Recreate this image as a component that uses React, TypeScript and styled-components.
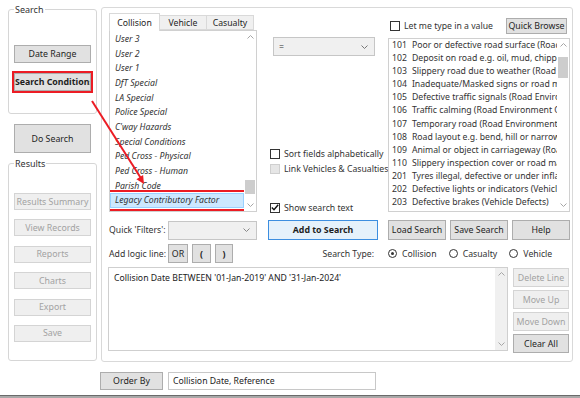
import styled, { createGlobalStyle } from "styled-components";

const GlobalStyle = createGlobalStyle`
  html, body { margin: 0; padding: 0; background: #fff; }
  body {
    font-family: "Noto Sans", "Open Sans", sans-serif;
    font-size: 8.7px;
    color: #1e1e1e;
  }
  * { box-sizing: border-box; }
`;

const Window = styled.div`
  position: relative;
  width: 580px;
  height: 398px;
  overflow: hidden;
  display: flex;
  flex-direction: column;
`;

const Body = styled.div`
  display: flex;
  gap: 4px;
  padding: 3px 0 0 8px;
`;

const LeftCol = styled.div`
  width: 89px;
  display: flex;
  flex-direction: column;
`;

const Group = styled.fieldset<{ $height: number }>`
  margin: 0;
  padding: 0 5px;
  min-width: 0;
  height: ${({ $height }) => $height}px;
  border: 1px solid #d6d6d6;
  border-radius: 3px;
`;

const Legend = styled.legend`
  padding: 0 1px;
  margin-left: 0;
  line-height: 13px;
  font-size: 9px;
  color: #333;
`;

const GroupBody = styled.div<{ $top: number; $gap: number }>`
  display: flex;
  flex-direction: column;
  gap: ${({ $gap }) => $gap}px;
  padding-top: ${({ $top }) => $top}px;
`;

const Btn = styled.button<{ $w?: number; $h?: number; $bold?: boolean; $flagged?: boolean; $primary?: boolean }>`
  width: ${({ $w }) => ($w ? `${$w}px` : "100%")};
  height: ${({ $h }) => $h ?? 19}px;
  flex: none;
  padding: 0;
  margin: 0;
  font-family: inherit;
  font-size: 8.8px;
  font-weight: ${({ $bold }) => ($bold ? 700 : 400)};
  color: #1e1e1e;
  white-space: nowrap;
  overflow: hidden;
  background: ${({ $primary }) => ($primary ? "#e5f1fb" : "#e1e1e1")};
  border: 1px solid ${({ $primary }) => ($primary ? "#3d8ee0" : "#adadad")};
  outline: ${({ $flagged }) => ($flagged ? "2px solid #ec1c24" : "none")};

  &:disabled {
    background: #efefef;
    border-color: #d4d4d4;
    color: #a2a2a2;
  }
`;

const MainPanel = styled.div`
  margin-top: 4px;
  width: 472px;
  height: 355px;
  border: 1px solid #d9d9d9;
  border-radius: 3px;
  padding: 5px 0 0 7px;
`;

const TopGrid = styled.div`
  display: grid;
  grid-template-columns: 148px 111px 182px;
  grid-template-rows: 203px 20px 19px;
  column-gap: 10px;
  row-gap: 4px;
`;

const Cell = styled.div`
  display: flex;
  flex-direction: column;
  min-width: 0;
`;

const InlineCell = styled.div<{ $end?: boolean }>`
  display: flex;
  align-items: center;
  gap: 4px;
  justify-content: ${({ $end }) => ($end ? "flex-end" : "flex-start")};
  padding-right: ${({ $end }) => ($end ? 4 : 0)}px;
  min-width: 0;
`;

const TabStrip = styled.div`
  display: flex;
  align-items: flex-end;
  height: 17px;
  padding-left: 1px;
  position: relative;
  z-index: 1;
`;

const Tab = styled.div<{ $w: number; $active?: boolean }>`
  width: ${({ $w }) => $w}px;
  height: ${({ $active }) => ($active ? 18 : 15)}px;
  margin-bottom: ${({ $active }) => ($active ? -1 : 0)}px;
  display: flex;
  align-items: center;
  justify-content: center;
  background: ${({ $active }) => ($active ? "#fff" : "#f0f0f0")};
  border: 1px solid #d9d9d9;
  border-bottom: ${({ $active }) => ($active ? "none" : "1px solid #d9d9d9")};
  margin-left: -1px;
  color: #1e1e1e;
`;

const ListBox = styled.div<{ $h: number }>`
  height: ${({ $h }) => $h}px;
  border: 1px solid #d0d0d0;
  display: flex;
  background: #fff;
`;

const ListItems = styled.div<{ $pad: number }>`
  flex: 1;
  min-width: 0;
  overflow: hidden;
  padding-top: ${({ $pad }) => $pad}px;
`;

const FieldItem = styled.div<{ $selected?: boolean }>`
  height: 14.67px;
  line-height: 13px;
  padding-left: 4px;
  font-style: italic;
  color: #333;
  white-space: nowrap;
  border: 1px solid ${({ $selected }) => ($selected ? "#99d1ff" : "transparent")};
  background: ${({ $selected }) => ($selected ? "#cce8ff" : "transparent")};
  outline: ${({ $selected }) => ($selected ? "2px solid #ec1c24" : "none")};
  outline-offset: 1px;
`;

const ValueItem = styled.div`
  height: 13.1px;
  line-height: 13.1px;
  padding-left: 3px;
  color: #333;
  white-space: nowrap;
`;

const Code = styled.span`
  margin-right: 5px;
`;

const Scroll = styled.div<{ $bg?: string }>`
  width: 12px;
  flex: none;
  display: flex;
  flex-direction: column;
  background: ${({ $bg }) => $bg ?? "#fff"};
`;

const ScrollArrow = styled.div`
  height: 12px;
  flex: none;
  display: flex;
  align-items: center;
  justify-content: center;
`;

const ScrollMid = styled.div`
  flex: 1;
  padding: 0 1px;
`;

const Thumb = styled.div<{ $top: number; $h: number }>`
  margin-top: ${({ $top }) => $top}px;
  height: ${({ $h }) => $h}px;
  background: #cdcdcd;
`;

const Chevron = ({ up, color = "#a6a6a6" }: { up?: boolean; color?: string }) => (
  <svg width="7" height="4" viewBox="0 0 7 4">
    <path
      d={up ? "M0.5 3.5 L3.5 0.5 L6.5 3.5" : "M0.5 0.5 L3.5 3.5 L6.5 0.5"}
      fill="none"
      stroke={color}
      strokeWidth="1"
    />
  </svg>
);

const ScrollBar = ({ top, h, bg }: { top?: number; h?: number; bg?: string }) => (
  <Scroll $bg={bg}>
    <ScrollArrow>
      <Chevron up />
    </ScrollArrow>
    <ScrollMid>{h ? <Thumb $top={top ?? 0} $h={h} /> : null}</ScrollMid>
    <ScrollArrow>
      <Chevron />
    </ScrollArrow>
  </Scroll>
);

const Combo = styled.div<{ $w: number; $ml?: number }>`
  width: ${({ $w }) => $w}px;
  height: 19px;
  margin-left: ${({ $ml }) => $ml ?? 0}px;
  flex: none;
  display: flex;
  align-items: center;
  justify-content: space-between;
  padding: 0 6px 0 5px;
  background: #f0f0f0;
  border: 1px solid #c6c6c6;
  color: #333;
`;

const CheckRow = styled.div<{ $mt: number }>`
  display: flex;
  align-items: center;
  gap: 4px;
  height: 13px;
  margin-top: ${({ $mt }) => $mt}px;
  margin-left: 3px;
  white-space: nowrap;
  color: #333;
`;

const Box = styled.span<{ $disabled?: boolean }>`
  width: 10px;
  height: 10px;
  flex: none;
  display: flex;
  align-items: center;
  justify-content: center;
  border: 1px solid ${({ $disabled }) => ($disabled ? "#cfcfcf" : "#333")};
  background: ${({ $disabled }) => ($disabled ? "#e6e6e6" : "#fff")};
`;

const Check = ({ checked, disabled, label, mt }: { checked?: boolean; disabled?: boolean; label: string; mt: number }) => (
  <CheckRow $mt={mt}>
    <Box $disabled={disabled}>
      {checked ? (
        <svg width="8" height="7" viewBox="0 0 8 7">
          <path d="M0.8 3.6 L3 5.8 L7.2 0.8" fill="none" stroke="#111" strokeWidth="1.4" />
        </svg>
      ) : null}
    </Box>
    {label}
  </CheckRow>
);

const Header = styled.div`
  display: flex;
  align-items: center;
  justify-content: space-between;
  margin-top: 5px;
  padding-right: 3px;
`;

const Label = styled.span<{ $w?: number }>`
  width: ${({ $w }) => ($w ? `${$w}px` : "auto")};
  flex: none;
  white-space: nowrap;
  color: #333;
`;

const ButtonRow = styled.div`
  display: grid;
  grid-template-columns: repeat(3, 1fr);
  gap: 4px;
`;

const RadioGroup = styled.div`
  display: flex;
  align-items: center;
`;

const RadioItem = styled.div`
  width: 62px;
  display: flex;
  align-items: center;
  gap: 5px;
  color: #333;
`;

const RadioDot = styled.span<{ $on?: boolean }>`
  width: 9px;
  height: 9px;
  border-radius: 50%;
  border: 1px solid #333;
  display: flex;
  align-items: center;
  justify-content: center;

  &::after {
    content: "";
    width: 3px;
    height: 3px;
    border-radius: 50%;
    background: ${({ $on }) => ($on ? "#333" : "transparent")};
  }
`;

const BottomRow = styled.div`
  display: flex;
  gap: 5px;
  margin: 4px 0 0 -1px;
`;

const QueryBox = styled.div`
  width: 400px;
  height: 84px;
  border: 1px solid #cfcfcf;
  display: flex;
`;

const QueryText = styled.div`
  flex: 1;
  padding: 4px 0 0 5px;
  line-height: 13px;
  color: #222;
`;

const SideButtons = styled.div`
  width: 56px;
  display: flex;
  flex-direction: column;
  gap: 3px;
  padding-top: 1px;
`;

const OrderRow = styled.div`
  display: flex;
  align-items: center;
  gap: 5px;
  margin-top: 10px;
  padding-left: 100px;
`;

const TextField = styled.div`
  width: 208px;
  height: 18px;
  border: 1px solid #c8c8c8;
  padding-left: 4px;
  line-height: 16px;
  color: #222;
`;

const BottomEdge = styled.div`
  margin-top: auto;
  height: 3px;
  border-top: 1px solid #6a6a6a;
  background: #a8a8a8;
`;

const Annotation = styled.svg`
  position: absolute;
  left: 0;
  top: 0;
  pointer-events: none;
`;

const fields = [
  "User 3",
  "User 2",
  "User 1",
  "DfT Special",
  "LA Special",
  "Police Special",
  "C'way Hazards",
  "Special Conditions",
  "Ped Cross - Physical",
  "Ped Cross - Human",
  "Parish Code",
  "Legacy Contributory Factor",
];

const values: [string, string][] = [
  ["101", "Poor or defective road surface (Road Environment Contributory)"],
  ["102", "Deposit on road e.g. oil, mud, chippings (Road Environment Contributory)"],
  ["103", "Slippery road due to weather (Road Environment Contributory)"],
  ["104", "Inadequate/Masked signs or road markings (Road Environment Contributory)"],
  ["105", "Defective traffic signals (Road Environment Contributory)"],
  ["106", "Traffic calming (Road Environment Contributory)"],
  ["107", "Temporary road (Road Environment Contributory)"],
  ["108", "Road layout e.g. bend, hill or narrow carriageway (Road Environment Contributory)"],
  ["109", "Animal or object in carriageway (Road Environment Contributory)"],
  ["110", "Slippery inspection cover or road marking (Road Environment Contributory)"],
  ["201", "Tyres illegal, defective or under inflated (Vehicle Defects)"],
  ["202", "Defective lights or indicators (Vehicle Defects)"],
  ["203", "Defective brakes (Vehicle Defects)"],
  ["204", "Defective steering or suspension (Vehicle Defects)"],
];

export default function App() {
  return (
    <Window>
      <GlobalStyle />
      <Body>
        <LeftCol>
          <Group $height={111}>
            <Legend>Search</Legend>
            <GroupBody $top={29} $gap={10}>
              <Btn $h={18}>Date Range</Btn>
              <Btn $h={18} $bold $flagged>
                Search Conditions
              </Btn>
            </GroupBody>
          </Group>
          <Btn $h={29} $w={77} style={{ margin: "10px 0 4px 6px" }}>
            Do Search
          </Btn>
          <Group $height={204}>
            <Legend>Results</Legend>
            <GroupBody $top={23} $gap={9.4}>
              <Btn $h={17} disabled>Results Summary</Btn>
              <Btn $h={17} disabled>View Records</Btn>
              <Btn $h={17} disabled>Reports</Btn>
              <Btn $h={17} disabled>Charts</Btn>
              <Btn $h={17} disabled>Export</Btn>
              <Btn $h={17} disabled>Save</Btn>
            </GroupBody>
          </Group>
        </LeftCol>

        <MainPanel>
          <TopGrid>
            <Cell>
              <TabStrip>
                <Tab $w={51} $active>Collision</Tab>
                <Tab $w={48}>Vehicle</Tab>
                <Tab $w={48}>Casualty</Tab>
              </TabStrip>
              <ListBox $h={182}>
                <ListItems $pad={1}>
                  {fields.map((f, i) => (
                    <FieldItem key={f} $selected={i === fields.length - 1}>
                      {f}
                    </FieldItem>
                  ))}
                </ListItems>
                <ScrollBar top={137} h={14} />
              </ListBox>
            </Cell>

            <Cell>
              <Combo $w={102} $ml={6} style={{ marginTop: 24 }}>
                <span>=</span>
                <Chevron color="#777" />
              </Combo>
              <Check label="Sort fields alphabetically" mt={91} />
              <Check label="Link Vehicles & Casualties" mt={2} disabled />
              <Check label="Show search text" mt={26} checked />
            </Cell>

            <Cell>
              <Header>
                <CheckRow $mt={0} style={{ marginLeft: 2 }}>
                  <Box />
                  Let me type in a value
                </CheckRow>
                <Btn $w={61} $h={16}>Quick Browse</Btn>
              </Header>
              <ListBox $h={174} style={{ marginTop: 4 }}>
                <ListItems $pad={0}>
                  {values.map(([code, text]) => (
                    <ValueItem key={code}>
                      <Code>{code}</Code>
                      {text}
                    </ValueItem>
                  ))}
                </ListItems>
                <ScrollBar top={6} h={21} />
              </ListBox>
            </Cell>

            <InlineCell>
              <Label $w={55}>Quick 'Filters':</Label>
              <Combo $w={89}>
                <span />
                <Chevron color="#888" />
              </Combo>
            </InlineCell>
            <InlineCell>
              <Btn $h={20} $w={110} $bold $primary style={{ marginLeft: 1 }}>
                Add to Search
              </Btn>
            </InlineCell>
            <ButtonRow>
              <Btn $h={20}>Load Search</Btn>
              <Btn $h={20}>Save Search</Btn>
              <Btn $h={20}>Help</Btn>
            </ButtonRow>

            <InlineCell>
              <Label $w={55}>Add logic line:</Label>
              <Btn $w={20} $h={19}>OR</Btn>
              <Btn $w={19} $h={19} $bold>(</Btn>
              <Btn $w={18} $h={19} $bold>)</Btn>
            </InlineCell>
            <InlineCell $end>
              <Label>Search Type:</Label>
            </InlineCell>
            <RadioGroup>
              <RadioItem>
                <RadioDot $on />
                Collision
              </RadioItem>
              <RadioItem>
                <RadioDot />
                Casualty
              </RadioItem>
              <RadioItem>
                <RadioDot />
                Vehicle
              </RadioItem>
            </RadioGroup>
          </TopGrid>

          <BottomRow>
            <QueryBox>
              <QueryText>Collision Date BETWEEN '01-Jan-2019' AND '31-Jan-2024'</QueryText>
              <ScrollBar bg="#f0f0f0" />
            </QueryBox>
            <SideButtons>
              <Btn disabled>Delete Line</Btn>
              <Btn disabled>Move Up</Btn>
              <Btn disabled>Move Down</Btn>
              <Btn>Clear All</Btn>
            </SideButtons>
          </BottomRow>
        </MainPanel>
      </Body>

      <OrderRow>
        <Btn $w={63} $h={18}>Order By</Btn>
        <TextField>Collision Date, Reference</TextField>
      </OrderRow>
      <BottomEdge />

      <Annotation width="580" height="398" viewBox="0 0 580 398">
        <line x1="92" y1="101" x2="140.5" y2="177.5" stroke="#ec1c24" strokeWidth="2" />
        <polygon points="144,184 136.4,179.3 143.1,175.1" fill="#ec1c24" />
      </Annotation>
    </Window>
  );
}
